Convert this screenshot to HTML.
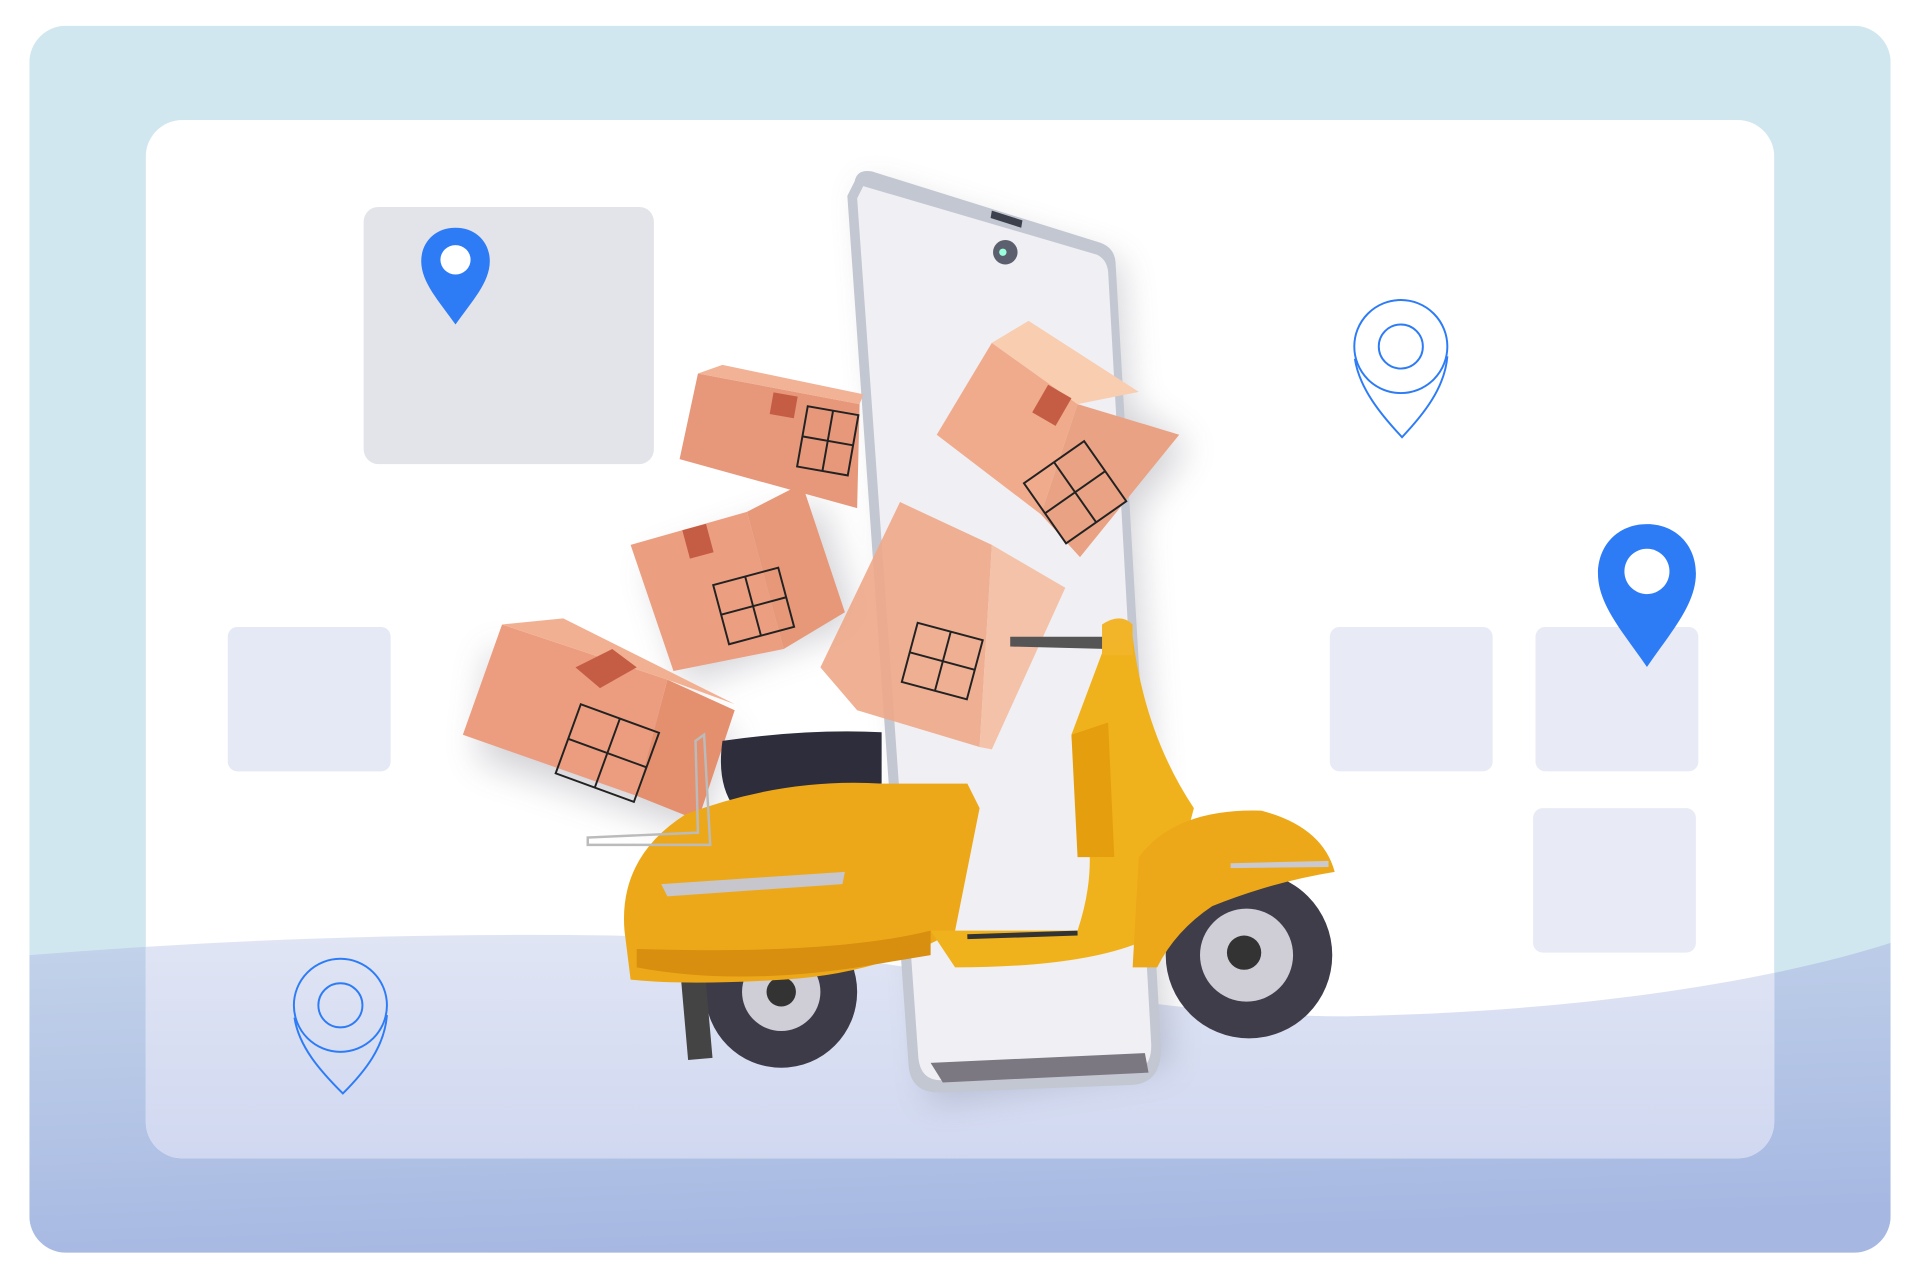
<!DOCTYPE html>
<html><head><meta charset="utf-8"><style>
html,body{margin:0;padding:0;background:#fff;width:1920px;height:1280px;overflow:hidden}
svg{display:block}
</style></head><body>
<svg width="1920" height="1280" viewBox="0 0 1568 1045.33" preserveAspectRatio="none" xmlns="http://www.w3.org/2000/svg">
<defs>
<linearGradient id="bot" x1="0" y1="0" x2="0.2" y2="1">
<stop offset="0" stop-color="#c3d3ea"/><stop offset="1" stop-color="#a6b8e2"/></linearGradient>
<linearGradient id="innerbot" x1="0" y1="0" x2="0" y2="1">
<stop offset="0" stop-color="#e0e5f4"/><stop offset="1" stop-color="#c9d2ef"/></linearGradient>
<clipPath id="outer"><rect x="24" y="21" width="1520" height="1002" rx="30"/></clipPath>
<clipPath id="inner"><rect x="119" y="98" width="1330" height="848" rx="30"/></clipPath>
<filter id="sh" x="-30%" y="-30%" width="160%" height="160%"><feGaussianBlur stdDeviation="14"/></filter>
<path id="pinf" d="M50 0 C80 0 100 22 100 50 C100 82 74 110 50 145 C26 110 0 82 0 50 C0 22 20 0 50 0 Z"/>
</defs>
<g clip-path="url(#outer)">
<rect x="24" y="21" width="1520" height="1002" fill="#d0e7ef"/>
<path d="M24 780 C200 766 350 762 500 764 C700 770 900 830 1100 830 C1300 826 1450 800 1544 770 L1544 1030 L24 1030Z" fill="url(#bot)"/>
</g>
<g clip-path="url(#inner)">
<rect x="119" y="98" width="1330" height="848" fill="#fff"/>
<path d="M24 780 C200 766 350 762 500 764 C700 770 900 830 1100 830 C1300 826 1450 800 1544 770 L1544 1030 L24 1030Z" fill="url(#innerbot)"/>
</g>
<rect x="297" y="169" width="237" height="210" rx="12" fill="#e3e4ea"/>
<rect x="186" y="512" width="133" height="118" rx="8" fill="#e5e8f5"/>
<rect x="1086" y="512" width="133" height="118" rx="8" fill="#e8ebf6"/>
<rect x="1254" y="512" width="133" height="118" rx="8" fill="#e8ebf6"/>
<rect x="1252" y="660" width="133" height="118" rx="8" fill="#e8ebf6"/>
<g transform="translate(344,186) scale(0.56,0.545)"><use href="#pinf" fill="#2d7cf6"/><circle cx="50" cy="48" r="22" fill="#fff"/></g>
<g transform="translate(1305,428) scale(0.80,0.805)"><use href="#pinf" fill="#2d7cf6"/><circle cx="50" cy="48" r="23" fill="#fff"/></g>
<g transform="translate(1106,247)" fill="none" stroke="#2d7cf6" stroke-width="1.6">
<circle cx="38" cy="36" r="38"/><circle cx="38" cy="36" r="18"/>
<path d="M0.5 46 C4 70 22 92 39 110 C56 92 74 70 76 44"/></g>
<g transform="translate(240,783)" fill="none" stroke="#2d7cf6" stroke-width="1.6">
<circle cx="38" cy="38" r="38"/><circle cx="38" cy="38" r="18"/>
<path d="M0.5 48 C4 72 22 92 40 110 C58 92 74 72 76 46"/></g>
<g filter="url(#sh)" opacity="0.25" fill="#556">
<path d="M400 530 L600 600 L570 680 L390 620Z"/>
<path d="M530 460 L670 410 L700 510 L560 560Z"/>
<path d="M780 370 L850 280 L970 365 L890 470Z"/>
<path d="M705 150 L915 215 L955 870 L760 900Z"/>
</g>
<path d="M698 148 Q700 138 712 140 L898 198 Q910 202 911 214 L948 852 Q950 884 925 886 L770 892 Q744 894 742 870 L692 160 Z" fill="#c3c7d1"/>
<path d="M705 152 L896 208 Q904 212 905 222 L940 850 Q942 874 922 876 L772 882 Q752 884 750 864 L700 162 Z" fill="#f0eff3"/>
<path d="M810 172 L835 180 L834 186 L809 178Z" fill="#3c3f4c"/>
<circle cx="821" cy="206" r="10" fill="#5c5f6e"/><circle cx="819" cy="206" r="3" fill="#9fd"/>
<path d="M760 868 L935 860 L938 876 L770 884Z" fill="#7b7882"/>
<g stroke="none">
<path d="M555 375 L570 305 L702 330 L700 415Z" fill="#e7977a"/>
<path d="M570 305 L590 298 L705 322 L702 330Z" fill="#f1b296"/>
<rect x="630" y="322" width="20" height="18" fill="#c55c44" transform="rotate(10 640 331)"/>
<path d="M515 445 L610 418 L640 530 L550 548Z" fill="#ec9e80"/>
<path d="M610 418 L655 395 L690 500 L640 530Z" fill="#e79879"/>
<rect x="560" y="430" width="20" height="24" fill="#c55c44" transform="rotate(-15 570 442)"/>
<path d="M378 600 L410 510 L545 555 L520 650Z" fill="#ec9d7f"/>
<path d="M545 555 L600 580 L570 670 L520 650Z" fill="#e4906f"/>
<path d="M410 510 L460 505 L600 575 L545 555Z" fill="#f2b093"/>
<path d="M470 545 L500 530 L520 545 L490 562Z" fill="#c55c44"/>
<path d="M670 545 L735 410 L810 445 L800 610 L700 580Z" fill="#eea788" opacity="0.9"/>
<path d="M810 445 L870 480 L810 612 L800 610Z" fill="#f4bda0" opacity="0.9"/>
<path d="M765 355 L810 280 L880 330 L850 420Z" fill="#f0ab8c"/>
<path d="M850 420 L880 330 L963 355 L882 455Z" fill="#e9a283"/>
<path d="M810 280 L840 262 L930 320 L880 330Z" fill="#f8cdb0"/>
<rect x="848" y="318" width="22" height="26" fill="#c55c44" transform="rotate(30 859 331)"/>
</g>
<g fill="none" stroke="#222" stroke-width="1.6">
<g transform="rotate(10 676 360)"><rect x="655" y="335" width="42" height="50"/><path d="M676 335V385M655 360H697"/></g>
<g transform="rotate(-15 615 495)"><rect x="588" y="470" width="55" height="50"/><path d="M615 470V520M588 495H643"/></g>
<g transform="rotate(20 496 615)"><rect x="462" y="585" width="68" height="60"/><path d="M496 585V645M462 615H530"/></g>
<g transform="rotate(-35 878 402)"><rect x="848" y="372" width="60" height="60"/><path d="M878 372V432M848 402H908"/></g>
<g transform="rotate(15 770 540)"><rect x="742" y="515" width="55" height="50"/><path d="M770 515V565M742 540H797"/></g>
</g>
<circle cx="638" cy="810" r="62" fill="#3e3b48"/><circle cx="638" cy="810" r="32" fill="#cfcdd6"/><circle cx="638" cy="810" r="12" fill="#333"/>
<rect x="558" y="780" width="20" height="85" fill="#444" transform="rotate(-5 568 820)"/>
<circle cx="1020" cy="780" r="68" fill="#403d4a"/><circle cx="1018" cy="780" r="38" fill="#cfcdd6"/><circle cx="1016" cy="778" r="14" fill="#333"/>
<path d="M590 605 Q660 595 720 598 L720 640 Q660 652 600 660 Q585 640 590 605Z" fill="#2d2d3c"/>
<path d="M510 760 Q505 700 560 665 Q640 635 720 640 L790 640 L800 660 L780 760 Q720 795 640 800 Q560 805 515 800Z" fill="#eca818"/>
<path d="M520 790 Q600 805 700 790 L760 780 L760 760 Q680 780 520 775Z" fill="#d88e0e"/>
<path d="M540 722 L690 712 L688 722 L545 732Z" fill="#c7c6cc"/>
<path d="M760 760 L880 760 Q900 700 880 650 L875 600 Q890 560 905 520 L925 520 Q935 600 975 660 Q960 720 930 770 Q880 790 780 790Z" fill="#f0b21c"/>
<path d="M875 600 L905 590 L910 700 L880 700Z" fill="#e59f0e"/>
<path d="M930 700 Q960 660 1030 662 Q1080 675 1090 712 Q1040 720 990 740 Q960 760 945 790 L925 790Z" fill="#eca818"/>
<path d="M1005 705 L1085 703 L1085 708 L1005 709Z" fill="#c9c9cf"/>
<path d="M825 520 L905 520 L905 530 L825 528Z" fill="#555"/>
<path d="M900 510 Q915 500 925 510 L925 535 L900 535Z" fill="#f2b52a"/>
<path d="M480 690 L580 690 L575 600 L568 605 L570 680 L480 684Z" fill="none" stroke="#bbb" stroke-width="2"/>
<path d="M790 765 L880 762" stroke="#333" stroke-width="4"/>
</svg>
</body></html>
